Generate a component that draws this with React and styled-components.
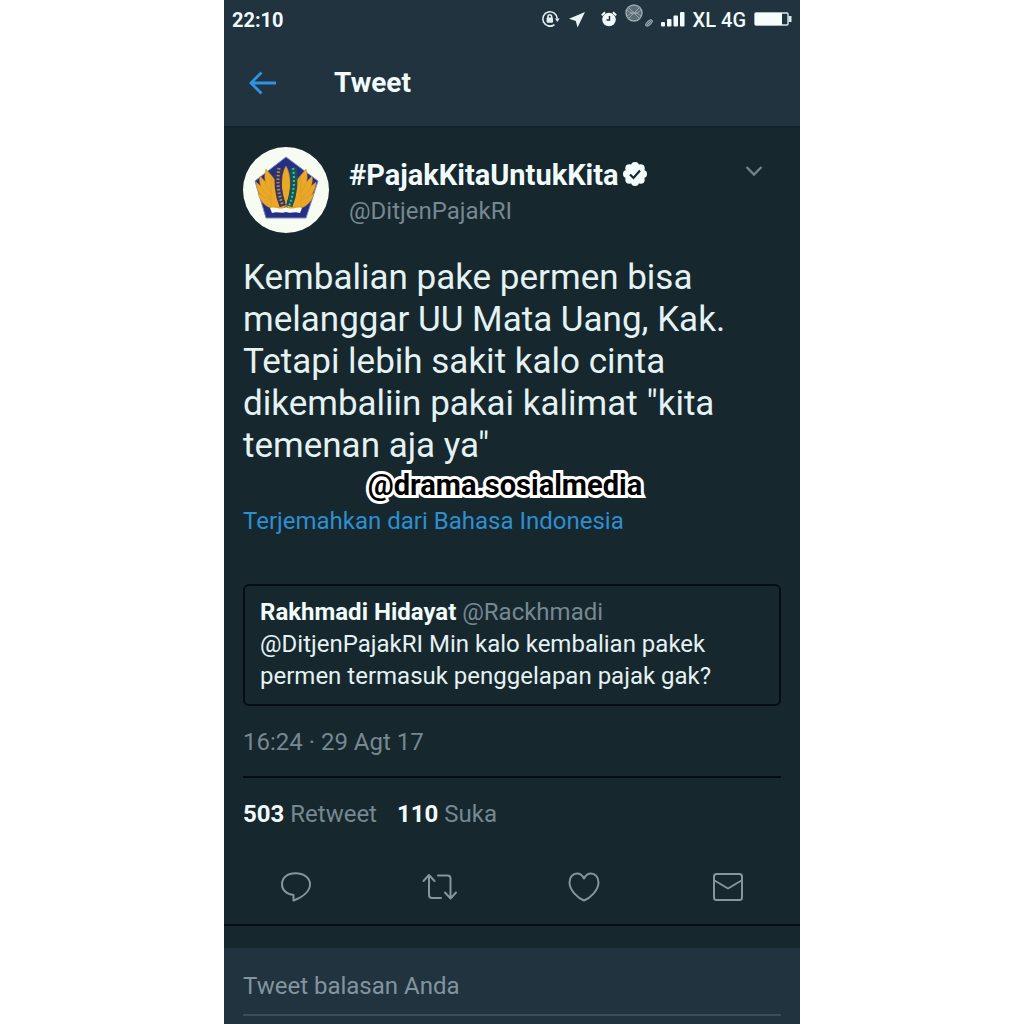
import React from 'react';
import styled, { createGlobalStyle } from 'styled-components';

const color = {
  bar: '#20333f',
  page: '#16272e',
  line: '#050d14',
  text: '#f1fbfb',
  body: '#e4f2f3',
  muted: '#768891',
  icon: '#84969e',
  link: '#2e8fd0',
};

const GlobalStyle = createGlobalStyle`
  *, *::before, *::after { box-sizing: border-box; }
  body {
    margin: 0;
    background: #ffffff;
    font-family: Roboto, "Liberation Sans", sans-serif;
  }
  button, input { font: inherit; }
  p, h1, h2 { margin: 0; }
`;

const Phone = styled.div`
  display: flex;
  flex-direction: column;
  width: 100%;
  max-width: 576px;
  min-height: 100vh;
  margin: 0 auto;
  background: ${color.page};
  color: ${color.text};
`;

const Header = styled.header`
  background: ${color.bar};
  border-bottom: 2px solid #13212b;
`;

const StatusBar = styled.div`
  display: flex;
  align-items: center;
  justify-content: space-between;
  height: 40px;
  padding: 0 8px;
  font-size: 20px;
  font-weight: 700;
`;

const StatusIcons = styled.div`
  display: flex;
  align-items: center;
`;

const Network = styled.span`
  padding: 0 8px 0 6px;
  font-weight: 500;
`;

const Toolbar = styled.div`
  display: flex;
  align-items: center;
  gap: 52px;
  height: 86px;
  padding: 0 20px;
`;

const Title = styled.h1`
  font-size: 28px;
  line-height: 32px;
  font-weight: 700;
`;

const IconButton = styled.button`
  display: inline-flex;
  align-items: center;
  justify-content: center;
  padding: 4px;
  border: 0;
  background: none;
  color: ${(p) => p.$color || color.icon};
  cursor: pointer;
`;

const Tweet = styled.article`
  padding: 19px 19px 0;
  border-bottom: 2px solid ${color.line};
`;

const Author = styled.div`
  display: flex;
  align-items: flex-start;
  gap: 20px;
`;

const AuthorText = styled.div`
  flex: 1;
  padding-top: 10px;
`;

const Name = styled.h2`
  display: flex;
  align-items: center;
  gap: 4px;
  font-size: 29px;
  line-height: 36px;
  font-weight: 700;
`;

const Handle = styled.p`
  font-size: 24px;
  line-height: 36px;
  color: ${color.muted};
`;

const MenuSlot = styled.div`
  padding: 14px 14px 0 0;
`;

const BodyWrap = styled.div`
  position: relative;
  padding-top: 24px;
`;

const Body = styled.p`
  font-size: 35px;
  line-height: 42px;
  color: ${color.body};
`;

const Watermark = styled.span`
  position: absolute;
  left: 0;
  right: 14px;
  bottom: -36px;
  text-align: center;
  font-size: 29px;
  line-height: 36px;
  font-weight: 700;
  color: #000000;
  -webkit-text-stroke: 6px #ffffff;
  paint-order: stroke fill;
  stroke-linejoin: round;
`;

const Translate = styled.a`
  display: block;
  padding: 38px 0 47px;
  font-size: 24px;
  line-height: 32px;
  color: ${color.link};
  text-decoration: none;
`;

const Quote = styled.blockquote`
  margin: 0;
  padding: 10px 15px 12px;
  border: 2px solid ${color.line};
  border-radius: 6px;
  font-size: 24px;
  line-height: 32px;
  color: ${color.body};
`;

const QuoteName = styled.strong`
  font-weight: 700;
  color: ${color.text};
`;

const Muted = styled.span`
  color: ${color.muted};
`;

const DateLine = styled.p`
  padding: 20px 0 18px;
  border-bottom: 2px solid ${color.line};
  font-size: 24px;
  line-height: 32px;
  color: ${color.muted};
`;

const Stats = styled.div`
  display: flex;
  gap: 20px;
  padding: 20px 0;
  font-size: 24px;
  line-height: 32px;
  color: ${color.muted};
`;

const Count = styled.strong`
  font-weight: 700;
  color: ${color.text};
`;

const Actions = styled.div`
  display: grid;
  grid-template-columns: repeat(4, 1fr);
  place-items: center;
  margin: 0 -19px;
  padding: 18px 0;
`;

const Reply = styled.footer`
  flex: 1;
  margin-top: 22px;
  padding: 18px 19px 8px;
  background: ${color.bar};
`;

const ReplyInput = styled.input`
  display: block;
  width: 100%;
  height: 50px;
  padding: 0 0 8px;
  border: 0;
  border-bottom: 2px solid #3a4f5b;
  border-radius: 0;
  outline: 0;
  background: none;
  font-size: 24px;
  color: ${color.text};
  &::placeholder { color: #82959e; opacity: 1; }
`;

const RotationLock = () => (
  <svg width="20" height="20" viewBox="0 0 20 20" fill="none" stroke="#e3eef0" strokeWidth="1.6">
    <path d="M14.5 14.6A7.2 7.2 0 1 1 17.2 8.6" />
    <path d="M15 8.5h4.6L17.3 12z" fill="#e3eef0" stroke="none" />
    <path d="M13 15.6A7.2 7.2 0 0 1 8 16" />
    <rect x="6.6" y="7.6" width="6.4" height="5.2" rx="1" fill="#e3eef0" stroke="none" />
    <path d="M8 8V6.6a1.8 1.8 0 0 1 3.6 0V8" />
  </svg>
);

const LocationArrow = () => (
  <svg width="29" height="20" viewBox="0 0 29 20" fill="#e9f4f5">
    <path d="M25 2 17.500 17.500l-1.700-6.500L9 8.800z" />
  </svg>
);

const Alarm = () => (
  <svg width="32" height="20" viewBox="0 0 32 20">
    <circle cx="20" cy="9.5" r="6.800" fill="#f1fbfb" />
    <path d="M12.800 5.400 16 2.200M27.200 5.400 24 2.200" stroke="#f1fbfb" strokeWidth="2" />
    <path d="M20.500 6v4h-3" fill="none" stroke="#20323f" strokeWidth="1.500" />
  </svg>
);

const Sticker = () => (
  <svg width="32" height="34" viewBox="0 0 32 34" fill="none" stroke="#9aa9b0">
    <circle cx="13" cy="10" r="8" fill="#5d6d77" strokeWidth="1.400" />
    <path d="m8 5 10 10M18 5 8 15M6 7c4 4 10 4 14 0M6 13c4-4 10-4 14 0" />
    <ellipse cx="28" cy="20" rx="4" ry="2" transform="rotate(-42 28 20)" fill="#5d6d77" />
    <path d="m25.500 22.500 5-5" />
  </svg>
);

const Signal = () => (
  <svg width="34" height="18" viewBox="0 0 34 18" fill="#f1fbfb">
    <rect x="8" y="11" width="4" height="4.500" rx="1" />
    <rect x="14" y="8" width="4.500" height="7.500" rx="1" />
    <rect x="20.500" y="4.500" width="4.500" height="11" rx="1" />
    <rect x="27" y="1" width="4.500" height="14.500" rx="1" />
  </svg>
);

const Battery = () => (
  <svg width="38" height="16" viewBox="0 0 38 16">
    <rect x="1" y="1" width="33" height="12" rx="1" fill="none" stroke="#dbe7ea" strokeWidth="1.400" />
    <rect x="1" y="1" width="27" height="12" fill="#f6fdfd" />
    <rect x="34.500" y="4" width="3" height="6" fill="#dbe7ea" />
  </svg>
);

const BackArrow = () => (
  <svg width="30" height="26" viewBox="0 0 30 26" fill="none" stroke="currentColor" strokeWidth="2.800">
    <path d="M28 13H3M13.500 2.500 3 13l10.500 10.500" />
  </svg>
);

const Verified = () => (
  <svg width="24" height="26" viewBox="0 0 24 26">
    <g fill="#f4fdfc">
      <circle cx="12" cy="12" r="9" />
      <circle cx="12" cy="4" r="4" />
      <circle cx="17.700" cy="6.300" r="4" />
      <circle cx="20" cy="12" r="4" />
      <circle cx="17.700" cy="17.700" r="4" />
      <circle cx="12" cy="20" r="4" />
      <circle cx="6.300" cy="17.700" r="4" />
      <circle cx="4" cy="12" r="4" />
      <circle cx="6.300" cy="6.300" r="4" />
    </g>
    <path d="m7 12.500 3.500 3.500L17 8.500" fill="none" stroke="#16262d" strokeWidth="2.200" />
  </svg>
);

const Chevron = () => (
  <svg width="18" height="12" viewBox="0 0 18 12" fill="none" stroke="currentColor" strokeWidth="2.400">
    <path d="m1.500 2 7.500 7.500L16.500 2" />
  </svg>
);

const wing = [
  'M41 59C25 57 14 50 13 35c5 5 12 9 20 13z',
  'M39 55C22 50 15 40 17 29c4 5 10 10 17 14z',
  'M38 54C25 46 19 34 23 22c5 6 10 12 14 17z',
  'M42 62C27 64 18 58 15 46c6 5 14 7 23 9z',
];

const Avatar = () => (
  <svg width="86" height="86" viewBox="0 0 86 86" role="img" aria-label="DitjenPajakRI">
    <circle cx="43" cy="43" r="43" fill="#f7fcf3" />
    <path d="M43 10 75 34 63 71H23L12 34z" fill="#262f86" stroke="#7f86bb" strokeWidth="1" />
    <g fill="#eaa829" stroke="#d39220" strokeWidth=".5">
      {wing.map((d) => <path key={d} d={d} />)}
      <g transform="translate(86 0) scale(-1 1)">
        {wing.map((d) => <path key={d} d={d} />)}
      </g>
      <path d="M28 30 42 60H28z" />
      <path d="M58 30 44 60h14z" />
      <path d="M43 19c5 8 6 25 0 41-6-16-5-33 0-41z" />
    </g>
    <path d="M36 21c-2 12-1 26 4 38" fill="none" stroke="#3b3550" strokeWidth="7" />
    <path d="M36 21c-2 12-1 26 4 38" fill="none" stroke="#a58a93" strokeWidth="3" strokeDasharray="1.500 2" />
    <path d="M50 21c2 12 1 26-4 38" fill="none" stroke="#17564f" strokeWidth="7" />
    <path d="M50 21c2 12 1 26-4 38" fill="none" stroke="#4fb8b4" strokeWidth="2" strokeDasharray="2 2" />
    <path d="M43 21c3 8 3 25 0 38-3-14-3-30 0-38z" fill="#eaa829" />
    <path d="M27 61c6-2 10 3 16-1 6 4 10-1 16 1l-2 5c-6-2-9 1-14-1-5 2-8-1-14 1z" fill="#f7fcf3" />
  </svg>
);

const strokeIcon = {
  fill: 'none',
  stroke: 'currentColor',
  strokeWidth: 2,
  strokeLinecap: 'round',
  strokeLinejoin: 'round',
};

const ReplyIcon = () => (
  <svg width="30" height="30" viewBox="0 0 30 30" {...strokeIcon}>
    <path d="M12.500 28.500V23C5.500 22.500 1 18 1 12.200 1 5.500 6.500 1.200 14.500 1.200S29 5.500 29 12.200C29 19 22 25 12.500 28.500z" />
  </svg>
);

const RetweetIcon = () => (
  <svg width="36" height="28" viewBox="0 0 36 28" {...strokeIcon}>
    <path d="M1.500 8 7 2l5.500 6M7 3v19q0 3 3 3h9" />
    <path d="M16 2.500h9.500q3 0 3 3V25M23 19.500l5.500 6 5.500-6" />
  </svg>
);

const HeartIcon = () => (
  <svg width="32" height="30" viewBox="0 0 32 30" {...strokeIcon}>
    <path d="M16 28.500C10 26 1.500 18.500 1.500 10.500 1.500 5 5 1.500 9 1.500c3.200 0 5.600 2 7 5 1.400-3 3.800-5 7-5 4 0 7.500 3.500 7.500 9 0 8-8.500 15.500-14.500 18z" />
  </svg>
);

const MailIcon = () => (
  <svg width="30" height="28" viewBox="0 0 30 28" {...strokeIcon}>
    <rect x="1" y="1" width="28" height="26" rx="2.500" />
    <path d="m1.500 7.500 13.500 8 13.500-8" />
  </svg>
);

const actions = [
  ['Balas', ReplyIcon],
  ['Retweet', RetweetIcon],
  ['Suka', HeartIcon],
  ['Pesan', MailIcon],
];

export default function App() {
  return (
    <>
      <GlobalStyle />
      <Phone>
        <Header>
          <StatusBar>
            <span>22:10</span>
            <StatusIcons>
              <RotationLock />
              <LocationArrow />
              <Alarm />
              <Sticker />
              <Signal />
              <Network>XL 4G</Network>
              <Battery />
            </StatusIcons>
          </StatusBar>
          <Toolbar>
            <IconButton aria-label="Kembali" $color="#2f93e0"><BackArrow /></IconButton>
            <Title>Tweet</Title>
          </Toolbar>
        </Header>
        <Tweet>
          <Author>
            <Avatar />
            <AuthorText>
              <Name>#PajakKitaUntukKita <Verified /></Name>
              <Handle>@DitjenPajakRI</Handle>
            </AuthorText>
            <MenuSlot>
              <IconButton aria-label="Menu" $color="#71838c"><Chevron /></IconButton>
            </MenuSlot>
          </Author>
          <BodyWrap>
            <Body>
              Kembalian pake permen bisa melanggar UU Mata Uang, Kak. Tetapi lebih sakit kalo
              cinta dikembaliin pakai kalimat "kita temenan aja ya"
            </Body>
            <Watermark>@drama.sosialmedia</Watermark>
          </BodyWrap>
          <Translate href="#terjemahan">Terjemahkan dari Bahasa Indonesia</Translate>
          <Quote>
            <p><QuoteName>Rakhmadi Hidayat</QuoteName> <Muted>@Rackhmadi</Muted></p>
            <p>@DitjenPajakRI Min kalo kembalian pakek permen termasuk penggelapan pajak gak?</p>
          </Quote>
          <DateLine>16:24 · 29 Agt 17</DateLine>
          <Stats>
            <span><Count>503</Count> Retweet</span>
            <span><Count>110</Count> Suka</span>
          </Stats>
          <Actions>
            {actions.map(([label, Icon]) => (
              <IconButton key={label} aria-label={label}><Icon /></IconButton>
            ))}
          </Actions>
        </Tweet>
        <Reply>
          <ReplyInput aria-label="Tweet balasan Anda" placeholder="Tweet balasan Anda" />
        </Reply>
      </Phone>
    </>
  );
}
